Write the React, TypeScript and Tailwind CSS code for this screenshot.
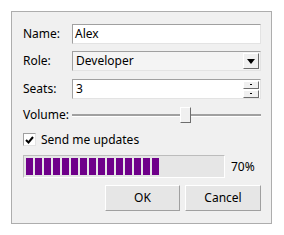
const sunken = "border border-t-[#a0a0a0] border-l-[#a0a0a0] border-r-[#e3e3e3] border-b-[#e3e3e3]";
const raised = "border border-t-white border-l-white border-r-[#6d6d6d] border-b-[#6d6d6d]";

function Field({ label, children }: { label: string; children: React.ReactNode }) {
  return (
    <div className="flex items-center h-[20px]">
      <span className="w-[49px] shrink-0">{label}</span>
      <div className="flex-1 h-full">{children}</div>
    </div>
  );
}

export default function App() {
  const chunks = Array.from({ length: 15 });
  return (
    <div className="w-[284px] h-[235px] bg-white pt-[11px] pl-[11px] text-[12px] text-black leading-none" style={{ fontFamily: '"Noto Sans", "Open Sans", sans-serif' }}>
      <div className="w-[261px] h-[213px] border border-[#adadad] bg-[#f0f0f0] pt-[12px] pl-[11px] pr-[10px] flex flex-col">
        <Field label="Name:">
          <div className={`h-full bg-white ${sunken} flex items-center pl-[2px]`}>Alex</div>
        </Field>
        <div className="mt-[7px]">
          <Field label="Role:">
            <div className={`h-full bg-[#f4f4f4] ${sunken} flex items-center pl-[3px] pr-[1px]`}>
              <span className="flex-1">Developer</span>
              <div className={`w-[16px] h-[16px] bg-[#f0f0f0] ${raised} flex items-center justify-center`}>
                <svg width="8" height="5" viewBox="0 0 8 5"><path d="M0 0h8L4 5z" fill="#000" /></svg>
              </div>
            </div>
          </Field>
        </div>
        <div className="mt-[8px]">
          <Field label="Seats:">
            <div className={`h-full bg-white ${sunken} flex items-center pl-[3px] pr-[1px]`}>
              <span className="flex-1">3</span>
              <div className="flex flex-col gap-[1px]">
                <div className={`w-[16px] h-[8px] bg-[#f0f0f0] ${raised} flex items-center justify-center`}>
                  <div className="w-[2px] h-[1px] bg-black" />
                </div>
                <div className={`w-[16px] h-[8px] bg-[#f0f0f0] ${raised} flex items-center justify-center`}>
                  <div className="w-[2px] h-[1px] bg-black" />
                </div>
              </div>
            </div>
          </Field>
        </div>
        <div className="mt-[8px] flex items-center h-[16px]">
          <span className="w-[49px] shrink-0">Volume:</span>
          <div className="flex-1 relative h-full flex items-center">
            <div className="w-full h-[3px] border-t-2 border-[#a0a0a0] border-b border-b-white" />
            <div className={`absolute left-[108px] top-0 w-[11px] h-[16px] bg-[#f0f0f0] ${raised}`} />
          </div>
        </div>
        <div className="mt-[10px] flex items-center h-[13px]">
          <div className={`w-[13px] h-[13px] bg-white ${sunken} flex items-center justify-center`}>
            <svg width="9" height="8" viewBox="0 0 9 8"><path d="M1 4l2.5 2.5L8 1" stroke="#000" strokeWidth="2" fill="none" /></svg>
          </div>
          <span className="ml-[5px]">Send me updates</span>
        </div>
        <div className="mt-[9px] flex items-center h-[23px]">
          <div className="w-[202px] h-full border border-t-[#bcbcbc] border-l-[#bcbcbc] border-r-white border-b-white bg-[#e6e6e6] flex items-stretch gap-[2px] pl-[2px] py-[2px]">
            {chunks.map((_, i) => (
              <div key={i} className="w-[7px] bg-[#6f008a]" />
            ))}
          </div>
          <span className="ml-[6px]">70%</span>
        </div>
        <div className="mt-[7px] flex justify-end gap-[5px]">
          <div className="w-[75px] h-[26px] bg-[#e6e6e6] border border-t-white border-l-white border-r-[#a0a0a0] border-b-[#a0a0a0] flex items-center justify-center">OK</div>
          <div className="w-[76px] h-[26px] bg-[#e6e6e6] border border-t-white border-l-white border-r-[#a0a0a0] border-b-[#a0a0a0] flex items-center justify-center">Cancel</div>
        </div>
      </div>
    </div>
  );
}
